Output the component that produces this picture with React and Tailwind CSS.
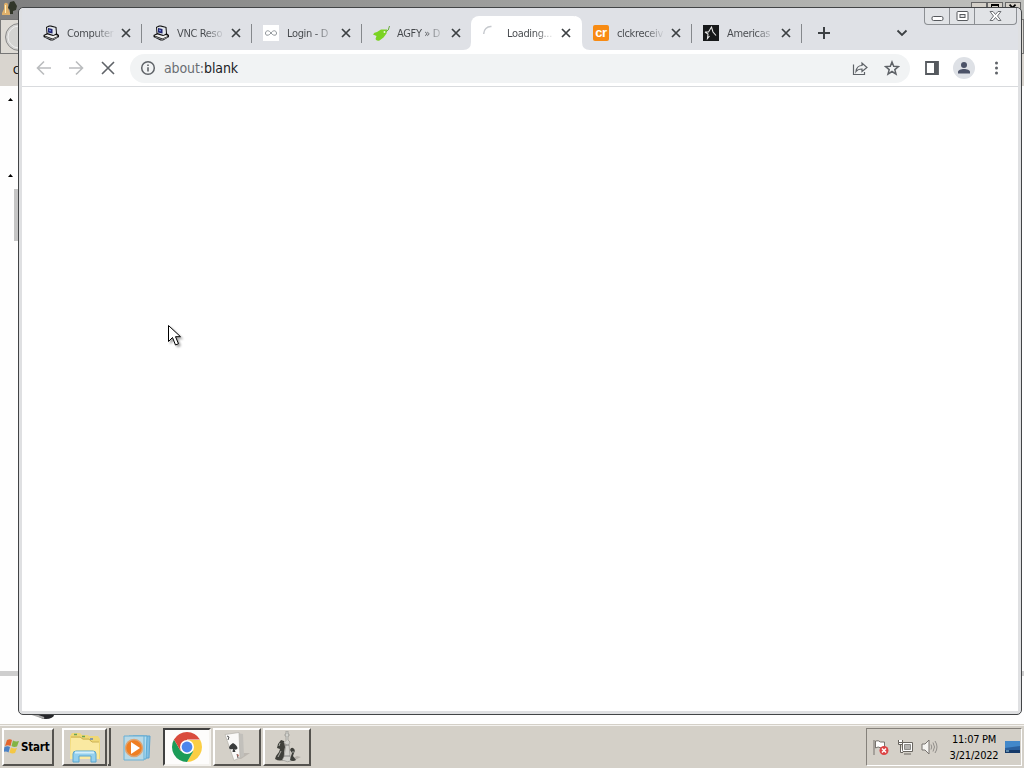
import React from 'react';

const ComputerIcon = () => (
    <svg width="16" height="16" viewBox="0 0 16 16">
        <path d="M3 2L6 .5h2L13.500 2l.5 6.500 2 1.500v2L10 15.500H7.500L.5 12v-2L3.500 8.500z" fill="#111" />
        <path d="M4 2.500L7 1.500l5.500 1.200.5 5.800L10.500 10 4.500 8z" fill="#e3e7ec" />
        <path d="M5 3l4.500 1v4.500L5 7.500z" fill="#20246f" />
        <path d="M6 4.500l2 .5v1.500L6 6z" fill="#6f8ad6" />
        <path d="M1.500 10.500l3-1 5.500 1.500 3-1 2 1-5.500 2.500z" fill="#f1f1ee" />
        <path d="M2 11.800l7 2.700 5.500-2.200" fill="none" stroke="#a9acb0" strokeWidth=".8" />
    </svg>
);

const LoopIcon = () => (
    <svg width="16" height="16" viewBox="0 0 16 16">
        <path fill="#fff" d="M0 0h16v16H0z" />
        <path d="M8 8C6 5 3 5 2.500 8S6 11 8 8s5-3 5.500 0S10 11 8 8z" fill="none" stroke="#92979c" />
    </svg>
);

const TagIcon = () => (
    <svg className="shrink-0" width="17" height="16" viewBox="0 0 17 16">
        <path d="M0 9.500Q1 7 4 7l4-2.500L14 4.500l-.5 4-3 4-4 3q-3 1-4-1.500l1-3z" fill="#7bd322" />
        <path d="M12.500 7q3.500-1 4-6" fill="none" stroke="#65a83b" />
        <circle cx="11.500" cy="7" r="1" fill="#e9f8dd" />
    </svg>
);

const SpinnerIcon = () => (
    <svg width="16" height="16" viewBox="0 0 16 16">
        <path d="M.8 9A7 7 0 0 1 8.500 1.500" fill="none" stroke="#c5c8cd" strokeWidth="1.400" />
    </svg>
);

const CrIcon = () => (
    <span className="flex h-4 w-4 items-center justify-center rounded-[2px] bg-[#f88b13] pb-[2px] font-['Liberation_Sans'] text-[13px] font-bold leading-none tracking-[-0.5px] text-white">cr</span>
);

const StarIcon = () => (
    <svg width="16" height="16" viewBox="0 0 16 16">
        <path fill="#17191a" d="M0 0h16v16H0z" />
        <path d="M2 7h3.500L8.500 2l1.500 5 3 3.500M2 7l3 2-.5 4.500L6.500 11" fill="none" stroke="#e6e6e6" strokeWidth="1.100" />
    </svg>
);

const tabs = [
    { title: 'Computer', icon: ComputerIcon },
    { title: 'VNC Reso', icon: ComputerIcon },
    { title: 'Login - D', icon: LoopIcon },
    { title: 'AGFY » D', icon: TagIcon },
    { title: 'Loading...', icon: SpinnerIcon, active: true },
    { title: 'clckreceiv', icon: CrIcon },
    { title: 'Americas', icon: StarIcon },
];

const Tab = ({ title, icon: Icon, active, divider }) => (
    <div className={`relative flex h-[34px] w-[110px] shrink-0 items-center pl-[12px] ${active ? 'rounded-t-lg bg-white' : ''}`}>
        {active && (
            <svg className="absolute bottom-0 -left-2" width="127" height="34" viewBox="0 0 127 34">
                <path d="M8 26v8H0q8 0 8-8zM112 0q7 1 7 8v18q0 8 8 8h-15z" fill="#fff" />
            </svg>
        )}
        <span className="relative flex w-4 shrink-0">
            <Icon />
        </span>
        <span className="relative ml-2 w-[47px] pt-px whitespace-nowrap bg-gradient-to-r from-[#45484c] from-60% to-[#45484c]/5 bg-clip-text text-[11px] leading-4 tracking-[-0.350px] text-transparent">
            {title}
        </span>
        <svg className="relative ml-[7px] shrink-0" width="10" height="10" viewBox="0 0 10 10">
            <path d="M1 1l8 8M9 1L1 9" stroke="#3c4043" strokeWidth="1.700" />
        </svg>
        {divider && <span className="absolute top-[8px] right-[-1px] h-[19px] w-px bg-[#85888c]" />}
    </div>
);

const WindowButtons = () => (
    <div className="absolute top-0 right-[1px] flex h-[17px] w-[93px] rounded-b-[4px] border border-t-0 border-[#8c8f93] bg-[#e1e3e6]">
        <div className="flex w-[25px] items-center justify-center border-r border-[#8c8f93]">
            <svg width="13" height="16" viewBox="0 0 13 16">
                <rect x="1" y="8.500" width="11" height="4" rx="1.500" fill="#fff" stroke="#56595d" />
            </svg>
        </div>
        <div className="flex w-[25px] items-center justify-center border-r border-[#8c8f93]">
            <svg width="13" height="16" viewBox="0 0 13 16">
                <rect x="1" y="3.500" width="11" height="9" rx="1" fill="#fff" stroke="#56595d" />
                <rect x="4" y="6.500" width="5" height="3" fill="#e1e3e6" stroke="#56595d" />
            </svg>
        </div>
        <div className="flex flex-1 items-center justify-center">
            <svg width="13" height="16" viewBox="0 0 13 16">
                <path d="M1 3.500h3l2.500 3 2.500-3h3L8.500 8l3.500 4.500H9L6.500 9.500 4 12.500H1L4.500 8z" fill="#fff" stroke="#6d7074" />
            </svg>
        </div>
    </div>
);

const TabStrip = () => (
    <div className="relative flex h-[42px] items-end bg-[#dfe1e6] pl-[9px]">
        {tabs.map((tab, i) => (
            <Tab key={i} {...tab} divider={!tab.active && !tabs[i + 1]?.active} />
        ))}
        <svg className="mb-[11px] ml-[17px]" width="12" height="12" viewBox="0 0 12 12">
            <path d="M6 0v12M0 6h12" stroke="#3c4043" strokeWidth="2" />
        </svg>
        <svg className="mb-[13px] ml-[66px]" width="12" height="8" viewBox="0 0 12 8">
            <path d="M1.500 1.500L6 6l4.500-4.500" fill="none" stroke="#3c4043" strokeWidth="1.800" />
        </svg>
        <WindowButtons />
    </div>
);

const Toolbar = () => (
    <div className="flex h-[37px] items-center border-b border-[#d9dbde] bg-white pl-[14px]">
        <svg width="16" height="16" viewBox="0 0 16 16" fill="none" stroke="#babcbe" strokeWidth="1.600">
            <path d="M15 8H2M8 1.500L1.500 8 8 14.500" />
        </svg>
        <svg className="ml-4" width="16" height="16" viewBox="0 0 16 16" fill="none" stroke="#babcbe" strokeWidth="1.600">
            <path d="M1 8h13M8 1.500L14.500 8 8 14.500" />
        </svg>
        <svg className="ml-4" width="16" height="16" viewBox="0 0 16 16" fill="none" stroke="#5f6368" strokeWidth="1.600">
            <path d="M2 2l12 12M14 2L2 14" />
        </svg>
        <div className="ml-[14px] flex h-[29px] w-[780px] items-center rounded-full bg-[#f1f3f4] pr-[10px] pl-[10px]">
            <svg width="16" height="16" viewBox="0 0 16 16">
                <circle cx="8" cy="8" r="6.300" fill="none" stroke="#5f6368" strokeWidth="1.500" />
                <path d="M8 7.200v4.200M8 4.500v1.500" stroke="#5f6368" strokeWidth="1.600" />
            </svg>
            <span className="ml-2 text-[14px] leading-5 tracking-[-0.100px] text-[#202124]">
                <span className="text-[#6a6e73]">about:</span>blank
            </span>
            <svg className="ml-auto" width="16" height="16" viewBox="0 0 16 16" fill="none" stroke="#5f6368" strokeWidth="1.200">
                <path d="M1.500 4.500v10h11V12" />
                <path d="M4 11.500c.5-4 3-6 6-6V3l5 4.500-5 4V9c-2.500 0-4.500.5-6 2.500z" />
            </svg>
            <svg className="ml-4" width="16" height="16" viewBox="0 0 16 16">
                <path d="M8 2l1.700 4.300 4.800.3-3.700 3 1.200 4.500L8 11.500l-4 2.600 1.200-4.500-3.700-3 4.800-.3z" fill="none" stroke="#5f6368" strokeWidth="1.500" />
            </svg>
        </div>
        <svg className="ml-[15px]" width="14" height="14" viewBox="0 0 14 14">
            <path d="M1 1h12v12H1z" fill="#fff" stroke="#55595e" strokeWidth="1.800" />
            <path d="M9 1h4v12H9z" fill="#55595e" />
        </svg>
        <svg className="ml-[14px]" width="22" height="22" viewBox="0 0 22 22">
            <circle cx="11" cy="11" r="11" fill="#dee1e6" />
            <circle cx="11" cy="8" r="3" fill="#4b5267" />
            <path d="M5 16.500v-1.500c0-4 12-4 12 0v1.500z" fill="#4b5267" />
        </svg>
        <svg className="ml-[19px]" width="4" height="14" viewBox="0 0 4 14" fill="#5f6368">
            <circle cx="2.500" cy="2" r="1.500" />
            <circle cx="2.500" cy="7" r="1.500" />
            <circle cx="2.500" cy="12" r="1.500" />
        </svg>
    </div>
);

const ChromeWindow = () => (
    <div className="absolute top-[7px] left-[18px] h-[708px] w-[1004px] overflow-hidden rounded-[5px] border border-[#424446] bg-[#dfe0e2]">
        <div className="h-full px-[3px] pb-[3px]">
            <div className="flex h-full flex-col">
                <TabStrip />
                <Toolbar />
                <div className="flex-1 bg-white" />
            </div>
        </div>
    </div>
);

const BackWindow = () => (
    <div className="flex h-[724px] flex-col bg-[#fefefe]">
        <div className="flex h-[19px] justify-between bg-gradient-to-r from-[#7f7f7f] to-[#bfc0bd]">
            <svg width="19" height="18" viewBox="0 0 19 18">
                <path d="M10 2l4-1 3 5-1 4-3 1v3h-3v-4L8 8z" fill="#32372a" />
                <path d="M4 5c0-3 4-3 4 0v3l2 5v2H2v-2l2-4z" fill="#dfb06b" />
                <path d="M5.500 5v8" stroke="#fff0bd" />
            </svg>
            <div className="mt-[2px] mr-[3px] flex h-[14px]">
                <span className="w-4 border border-[#666] bg-[#d4d0c8]" />
                <span className="flex w-4 justify-center border border-[#666] bg-[#d4d0c8]">
                    <span className="mt-px h-2 w-2 border border-t-2 border-black" />
                </span>
                <svg className="ml-[2px] border border-[#666] bg-[#d4d0c8]" width="16" height="14" viewBox="0 0 16 14">
                    <path d="M4 2l7 7M11 2L4 9" stroke="#000" strokeWidth="2" />
                </svg>
            </div>
        </div>
        <div className="h-[35px] border border-[#777] bg-[#dedbd5]">
            <svg width="32" height="33" viewBox="0 0 32 33">
                <circle cx="18" cy="17" r="13.500" fill="#d3d3d1" stroke="#888" />
                <circle cx="18" cy="17" r="11" fill="none" stroke="#eee" />
            </svg>
        </div>
        <div className="h-[32px] bg-[#d9d5cf] pt-[9px] pl-[13px] text-[11px] leading-4 text-black">C</div>
        <div className="flex w-[18px] flex-1 flex-col items-end">
            <svg className="mt-[11px] mr-[5px]" width="5" height="4" viewBox="0 0 5 4">
                <path d="M0 4l2.500-3L5 4z" fill="#000" />
            </svg>
            <svg className="mt-[72px] mr-[5px]" width="5" height="4" viewBox="0 0 5 4">
                <path d="M0 4l2.500-3L5 4z" fill="#000" />
            </svg>
            <div className="mt-[12px] h-[52px] w-[4px] bg-[#c6c6c6]" />
        </div>
        <div className="h-[5px] bg-[#cecece]" />
        <div className="flex h-[48px] items-end pl-[28px]">
            <svg width="30" height="14" viewBox="0 0 30 14" className="mb-[1px]">
                <ellipse cx="18" cy="6" rx="8" ry="4" fill="#25262a" />
                <path d="M1 4l15 5" stroke="#aaa" strokeWidth="2" />
            </svg>
        </div>
    </div>
);

const TaskButton = ({ active, children }) => (
    <div className={`flex h-[38px] w-[48px] items-center justify-center border-2 pr-px ${active ? 'border-t-[#404040] border-r-[#f5f3ef] border-b-[#f5f3ef] border-l-[#404040] bg-[#fdfcfb]' : 'border-t-white border-r-[#55534f] border-b-[#55534f] border-l-white bg-[#d4d0c8]'}`}>
        {children}
    </div>
);

const StartButton = () => (
    <div className="flex h-[38px] w-[52px] items-center border-2 border-t-white border-r-[#55534f] border-b-[#55534f] border-l-white">
        <svg className="shrink-0" width="16" height="16" viewBox="0 0 16 16">
            <path d="M3 1q3-1.500 5 0L6.500 7Q4 5.500 1 7z" fill="#e4652c" />
            <path d="M9 1.500q3 1.500 6 .5l-2 5.500q-3 1-5.500-.5z" fill="#83b444" />
            <path d="M.5 8q3-1.500 5.500 0l-1.500 5.500q-2-1.500-5-.5z" fill="#4b82c5" />
            <path d="M7 8.500q3 1.500 6 .5l-2 5q-3 1-5.500-.5z" fill="#f4c744" />
        </svg>
        <span className="ml-px text-[11.500px] leading-4 font-bold tracking-[-0.200px] text-black">Start</span>
    </div>
);

const ExplorerIcon = () => (
    <svg width="34" height="32" viewBox="0 0 34 32">
        <path d="M4 2h8l2 2h6l1 1h9l2 3v20H2V5z" fill="#efd878" />
        <path d="M3 7h10l2 2h6l2 2h8v17H2z" fill="#fae9a1" />
        <path d="M3 6h9l3 2h6l3 3h7" fill="none" stroke="#ccb255" />
        <path d="M6 3.500h3M14 5.500h3" stroke="#68a355" strokeWidth="1.500" />
        <path d="M22 8h3" stroke="#6185bb" strokeWidth="1.500" />
        <path d="M5 31V23q0-3 3-3h17q3 0 3 3v8h-5v-6H11v6z" fill="#94d0ee" stroke="#5ba6ce" />
        <path d="M7 21.500h19" stroke="#d5f0fb" strokeWidth="2" />
    </svg>
);

const MediaPlayerIcon = () => (
    <svg width="28" height="28" viewBox="0 0 28 28">
        <path d="M10 2h17l-1 22H8z" fill="#83c0e3" stroke="#5fa4cf" />
        <path d="M6 2h18l-1 23H5z" fill="#b4def2" stroke="#5eabd3" />
        <path d="M1 2h20v24H1z" fill="#b9d9e6" stroke="#68b0d6" />
        <circle cx="11" cy="14" r="8.500" fill="#ef7e22" stroke="#dca474" strokeWidth="1.500" />
        <path d="M8 8v12l9-6z" fill="#fff" />
    </svg>
);

const ChromeIcon = () => (
    <svg width="30" height="30" viewBox="0 0 30 30">
        <path d="M15 15L2.010 7.500A15 15 0 0 1 27.990 7.500H15z" fill="#d94b3d" />
        <path d="M15 15L27.990 7.500A15 15 0 0 1 15 30l6.500-11z" fill="#fbce43" />
        <path d="M15 15l6.500 4L15 30A15 15 0 0 1 2.010 7.500l6.500 11.250z" fill="#1b9c58" />
        <path d="M8.500 18.700L2.010 7.500l5-3.500L15 15z" fill="#d94b3d" />
        <path d="M15 8h12.990a15 15 0 0 1-6.500 12L15 15z" fill="#fbce43" />
        <circle cx="15" cy="15" r="7" fill="#fff" />
        <circle cx="15" cy="15" r="5.400" fill="#4c86ec" />
    </svg>
);

const CardsIcon = () => (
    <svg width="30" height="32" viewBox="0 0 30 32">
        <path d="M14 28l8-6 6 0-9 6z" fill="#bdb8b1" />
        <path d="M15 2l6 1 1 22-8 4z" fill="#c2c0bb" />
        <path d="M3 3.500l14-2 1 25-6 3z" fill="#faf9f7" stroke="#b4b1ab" strokeWidth=".7" />
        <path d="M11 12q4.500 2.500 4.500 5.500-1.500 2-3 .5l1 3h-3l.5-3q-3 1-4-1 0-2.500 4-5z" fill="#3a3c3c" />
        <path d="M5 5l2 1-1 3M15 23l1 4" stroke="#555" fill="none" />
        <path d="M15 23l2 1-1 2z" fill="#bd695c" />
    </svg>
);

const ChessIcon = () => (
    <svg width="32" height="32" viewBox="0 0 32 32">
        <path d="M20 28l6-3 4 1-8 4z" fill="#b5b0a9" />
        <path d="M4 28l1-3 3-4 1-3-3-1 1-4 3-4 3 1 1 6-1 6 1 6q-5 3-10 0z" fill="#3e3f3a" />
        <path d="M11 29.500l2-4 2-12-2-2 2-2V5h-1V3h1V0h2v3h1v2h-1v4l2 2-1 2 1 12 2 4.500q-5 2.500-8 0z" fill="#d3d3ce" stroke="#8c8c88" strokeWidth=".6" />
        <path d="M19 29l1-4 1-3-2-3q1-3 3-2 3 2 1 5l-1 3 3 4q-3 2-6 0z" fill="#3e3f3a" />
        <path d="M9 12l-1 3M10 20l-3 6M22 20v2" stroke="#c9c9c3" strokeWidth=".8" />
        <path d="M14 14h4M13 25h6" stroke="#777" strokeWidth=".8" />
    </svg>
);

const TrayIcons = () => (
    <div className="flex items-center">
        <svg width="16" height="17" viewBox="0 0 16 17">
            <path d="M1 1v15M2.500 2q3-1 5 1h4v6H8Q5 7 2.500 9z" fill="#fff" stroke="#77736e" />
            <circle cx="11" cy="11.500" r="4.500" fill="#dc4546" />
            <path d="M9 9.500l4 4M13 9.500l-4 4" stroke="#fff" strokeWidth="1.500" />
        </svg>
        <svg className="ml-2" width="17" height="17" viewBox="0 0 17 17">
            <path d="M5.500 3.500h10v9h-10z" fill="#fff" stroke="#68655f" />
            <path d="M7.500 5.500h6v5h-6z" fill="#b3b2af" stroke="#8b8a87" />
            <path d="M1.500 1v2.500h4V1M1.500 3.500v2h4v-2zM3.500 6v7.500H6M7 15h7" fill="#fff" stroke="#68655f" />
        </svg>
        <svg className="ml-[7px]" width="17" height="16" viewBox="0 0 17 16">
            <path d="M1 5h3l4-4v14l-4-4H1z" fill="#f5f4f1" stroke="#77736e" />
            <path d="M10 5.500q1.500 2.500 0 5M12 3.500q3 4.500 0 9M14 2q4 6 0 12" fill="none" stroke="#918e8a" />
        </svg>
    </div>
);

const Taskbar = () => (
    <div className="flex h-11 items-start border-t border-[#d4d0c8] bg-[#d4d0c8] pt-[3px] pl-[2px] shadow-[inset_0_1px_0_#f4f2ef]">
        <StartButton />
        <div className="ml-[8px] flex">
            <div className="flex h-[38px] w-[45px] items-center justify-center border-2 border-t-white border-r-[#55534f] border-b-[#55534f] border-l-white">
                <ExplorerIcon />
            </div>
            <div className="ml-px h-[38px] w-[3px] border-r-2 border-b-2 border-[#55534f]" />
        </div>
        <div className="flex h-[39px] w-[52px] items-center justify-center">
            <MediaPlayerIcon />
        </div>
        <div className="flex gap-[2px]">
            <TaskButton active><ChromeIcon /></TaskButton>
            <TaskButton><CardsIcon /></TaskButton>
            <TaskButton><ChessIcon /></TaskButton>
        </div>
        <div className="mr-[2px] ml-auto flex h-[38px] w-[156px] items-center border border-t-[#85817b] border-r-white border-b-white border-l-[#85817b] pl-[6px]">
            <TrayIcons />
            <div className="ml-[9px] w-[54px] pt-px text-center text-[11px] leading-4 tracking-[-0.200px] whitespace-nowrap text-black">
                <div className="tracking-[-0.300px]">11:07 PM</div>
                <div>3/21/2022</div>
            </div>
            <svg className="ml-[4px] shrink-0" width="15" height="14" viewBox="0 0 15 14">
                <path d="M0 1h15v12H0z" fill="#2a609e" />
                <path d="M0 1h15v5L0 8z" fill="#4288ca" />
                <path d="M0 10h15v3H0z" fill="#163a69" />
                <path d="M1 11h3" stroke="#9ed4eb" />
            </svg>
        </div>
    </div>
);

const App = () => (
    <div className="relative h-[768px] w-[1024px] overflow-hidden bg-white font-['DejaVu_Sans_Condensed','DejaVu_Sans',sans-serif]">
        <BackWindow />
        <Taskbar />
        <ChromeWindow />
        <svg className="absolute top-[325px] left-[168px] drop-shadow-[2px_2px_1px_rgba(0,0,0,0.35)]" width="13" height="21" viewBox="0 0 13 21">
            <path d="M.5.500v16l4-4 3 7.500 3-1.300-3-7h5z" fill="#fff" stroke="#000" />
        </svg>
    </div>
);

export default App;
